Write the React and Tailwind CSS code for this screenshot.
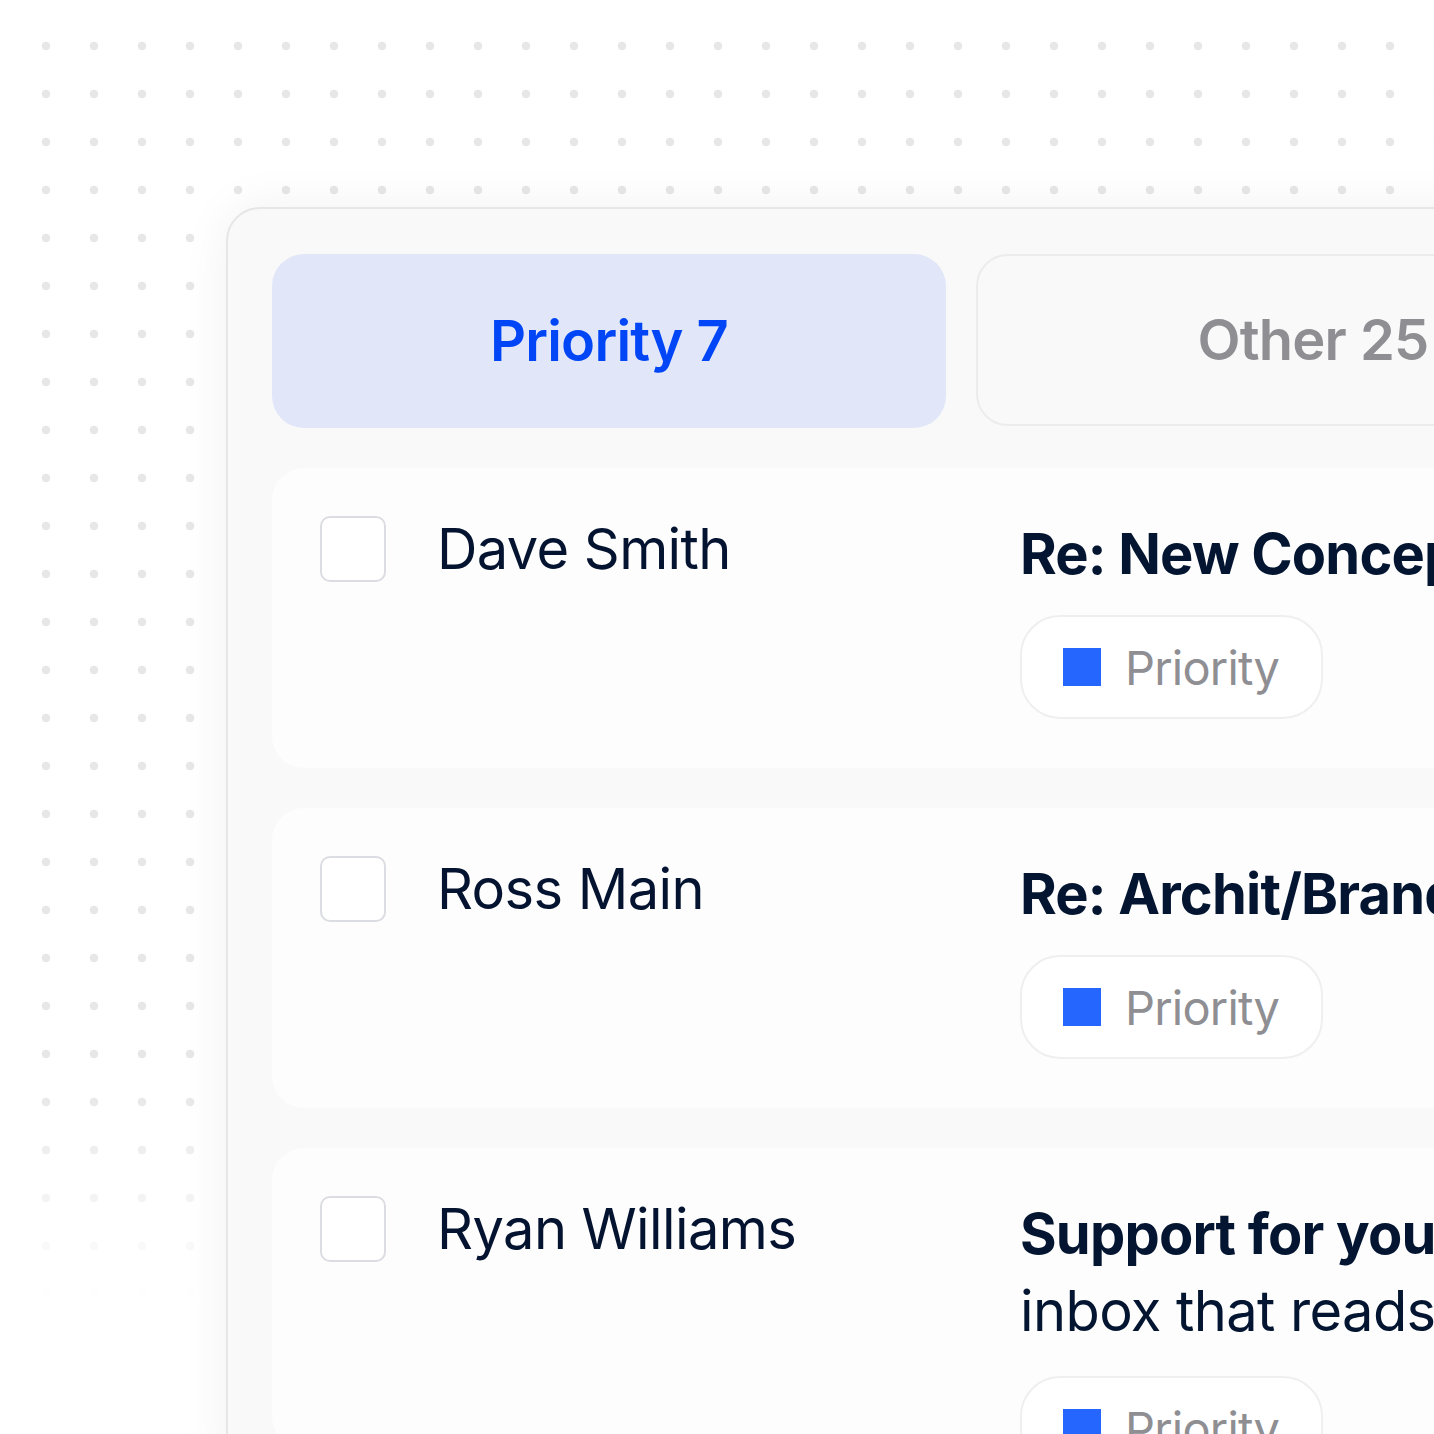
import React from "react";

function Badge() {
  return (
    <div className="inline-flex h-[104px] items-center rounded-[40px] border-2 border-[#efeff0] bg-white pl-[41px] pr-[42px]">
      <span className="h-[38px] w-[38px] bg-[#2566ff]" />
      <span className="ml-[24px] text-[47px] leading-none tracking-[-0.8px] text-[#8e8e93]">Priority</span>
    </div>
  );
}

function Row({ name, subject, snippet }) {
  return (
    <div className="flex h-[300px] shrink-0 items-start rounded-[32px] bg-[#fdfdfd] px-[48px] pt-[48px]">
      <div className="h-[66px] w-[66px] shrink-0 rounded-[10px] border-2 border-[#dcdde2] bg-white" />
      <div className="ml-[51px] w-[583px] shrink-0 whitespace-nowrap text-[56px] leading-[67px] tracking-[-0.6px] text-[#041330]">
        {name}
      </div>
      <div className="flex flex-col items-start">
        <div className="whitespace-nowrap text-[56px] font-bold leading-[77px] tracking-[-0.8px] text-[#031530]">
          {subject}
        </div>
        {snippet && (
          <div className="whitespace-nowrap text-[56px] leading-[77px] tracking-[-0.6px] text-[#031530]">{snippet}</div>
        )}
        <div className={snippet ? "mt-[26px]" : "mt-[22px]"}>
          <Badge />
        </div>
      </div>
    </div>
  );
}

export default function App() {
  return (
    <div
      className="h-[1434px] w-[1434px] overflow-hidden bg-white pl-[226px] pt-[207px] [background-image:linear-gradient(to_bottom,#ffffff_20px,rgba(255,255,255,0)_20px),linear-gradient(to_right,#ffffff_20px,rgba(255,255,255,0)_20px),linear-gradient(to_bottom,rgba(255,255,255,0)_1080px,#ffffff_1300px),radial-gradient(circle,#e7e7e7_4px,transparent_4.6px)] [background-position:0_0,0_0,0_0,22px_22px] [background-repeat:no-repeat,no-repeat,no-repeat,repeat] [background-size:100%_100%,100%_100%,100%_100%,48px_48px]"
      style={{ fontFamily: "Inter, 'Noto Sans', sans-serif" }}
    >
      <div className="w-[1600px] rounded-[34px] border-2 border-[#e6e6e6] bg-[#f9f9f9] px-[44px] pt-[45px] shadow-[0_0_50px_rgba(0,0,0,0.06)]">
        <div className="flex gap-[30px]">
          <div className="flex h-[174px] w-[674px] shrink-0 items-center justify-center rounded-[32px] bg-[#e1e7f8] text-[56px] font-semibold tracking-[-0.8px] text-[#0146f6]">
            <span>Priority</span>
            <span className="ml-[14px]">7</span>
          </div>
          <div className="flex h-[172px] w-[674px] shrink-0 items-center justify-center rounded-[32px] border-2 border-[#ececec] bg-[#f9f9f9] text-[56px] font-semibold tracking-[-0.8px] text-[#8e8e93]">
            <span>Other</span>
            <span className="ml-[14px]">25</span>
          </div>
        </div>
        <div className="mt-[40px] flex flex-col gap-[40px] pb-[40px]">
          <Row name="Dave Smith" subject="Re: New Concept Designs" />
          <Row name="Ross Main" subject="Re: Archit/Brand Review" />
          <Row name="Ryan Williams" subject="Support for your team" snippet="inbox that reads everything" />
        </div>
      </div>
    </div>
  );
}
